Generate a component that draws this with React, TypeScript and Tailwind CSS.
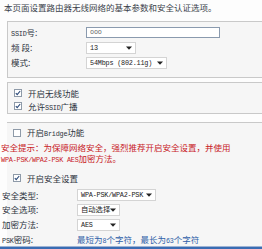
import React from 'react';

const FONT = '"Noto Sans CJK SC", "Liberation Sans", sans-serif';

const Latin: React.FC<{ children: React.ReactNode }> = ({ children }) => (
  <span className="text-[6.8px] tracking-[-0.2px]" style={{ fontFamily: '"Liberation Mono", monospace' }}>
    {children}
  </span>
);

const Arrow = () => (
  <svg width="6" height="4" viewBox="0 0 6 4" className="shrink-0">
    <path d="M0 0.5h6L3 3.8z" fill="#222" />
  </svg>
);

const Select: React.FC<{ w: string; children: React.ReactNode }> = ({ w, children }) => (
  <div className={`${w} h-[12px] flex items-center justify-between pl-[3px] pr-[3px] bg-white border border-[#d4d4d4] text-[#222] text-[7.3px]`}>
    <span className="leading-none whitespace-nowrap">{children}</span>
    <Arrow />
  </div>
);

const Check: React.FC<{ on?: boolean }> = ({ on }) => (
  <div className="w-[8px] h-[8px] border border-[#8e9aa8] bg-white flex items-center justify-center shrink-0">
    {on && (
      <svg width="6" height="6" viewBox="0 0 6 6">
        <path d="M0.8 3.2l1.4 1.5L5.2 1" stroke="#2b4a7a" strokeWidth="1.1" fill="none" />
      </svg>
    )}
  </div>
);

const Row: React.FC<{ label: React.ReactNode; h?: string; children: React.ReactNode }> = ({ label, h = 'h-[15px]', children }) => (
  <div className={`${h} flex items-center`}>
    <div className="w-[75px] shrink-0 text-[#2d3340] leading-none whitespace-nowrap">{label}</div>
    {children}
  </div>
);

export default function App() {
  return (
    <div className="w-[262px] h-[249px] overflow-hidden bg-[#fdfdfd] text-[8.5px] relative" style={{ fontFamily: FONT }}>
      <div className="h-[19px] pl-[4px] pt-[3px] text-[#3a3f4a] leading-none whitespace-nowrap">
        本页面设置路由器无线网络的基本参数和安全认证选项。
      </div>

      {/* basic settings */}
      <div className="ml-[7px] mt-[2px] h-[57px] border border-r-0 border-[#c9c9c9] bg-[#f6f6f6] pl-[3px] pt-[3px]">
        <Row label={<><Latin>SSID</Latin>号:</>}>
          <div className="w-[134px] h-[11px] bg-white border border-[#8a9aae] pl-[3px] flex items-center text-[#666]">
            <Latin>ooo</Latin>
          </div>
        </Row>
        <Row label="频 段:">
          <Select w="w-[50px]"><Latin>13</Latin></Select>
        </Row>
        <Row label="模式:">
          <Select w="w-[81px]"><Latin>54Mbps (802.11g)</Latin></Select>
        </Row>
      </div>

      {/* wireless switches */}
      <div className="ml-[7px] mt-[4px] h-[32px] border border-r-0 border-[#c9c9c9] bg-[#f6f6f6] pl-[6px] pt-[3px] flex flex-col">
        <div className="h-[15px] flex items-center gap-[6px] text-[#2d3340]">
          <Check on />
          <span className="leading-none">开启无线功能</span>
        </div>
        <div className="h-[14px] flex items-center gap-[6px] text-[#2d3340]">
          <Check on />
          <span className="leading-none">允许<Latin>SSID</Latin>广播</span>
        </div>
      </div>

      {/* security */}
      <div className="ml-[7px] mt-[8px] border-t border-[#c9c9c9] bg-[#f6f6f6] h-[124px]">
        <div className="h-[19px] pl-[6px] flex items-center gap-[6px] text-[#2d3340]">
          <Check />
          <span className="leading-none">开启<Latin>Bridge</Latin>功能</span>
        </div>
        <div className="-ml-[6px] text-[#c8191e] leading-[11px] whitespace-nowrap">
          <div>安全提示：为保障网络安全，强烈推荐开启安全设置，并使用</div>
          <div><Latin>WPA-PSK/WPA2-PSK AES</Latin>加密方法。</div>
        </div>
        <div className="h-[20px] mt-[2px] pl-[6px] flex items-center gap-[6px] text-[#2d3340]">
          <Check on />
          <span className="leading-none">开启安全设置</span>
        </div>
        <div className="-ml-[6px] pl-[1px]">
          <Row label="安全类型:" h="h-[14px]">
            <Select w="w-[79px]"><Latin>WPA-PSK/WPA2-PSK</Latin></Select>
          </Row>
          <Row label="安全选项:" h="h-[15px]">
            <Select w="w-[43px]">自动选择</Select>
          </Row>
          <Row label="加密方法:" h="h-[15px]">
            <Select w="w-[43px]"><Latin>AES</Latin></Select>
          </Row>
          <Row label={<><Latin>PSK</Latin>密码:</>} h="h-[15px]">
            <span className="text-[#2f5fa8] leading-none whitespace-nowrap">最短为<Latin>8</Latin>个字符，最长为<Latin>63</Latin>个字符</span>
          </Row>
        </div>
      </div>
      <div className="h-[1px] bg-[#9db3d4]" />
      <div className="h-[3px] bg-[#3a6cb3]" />
    </div>
  );
}
